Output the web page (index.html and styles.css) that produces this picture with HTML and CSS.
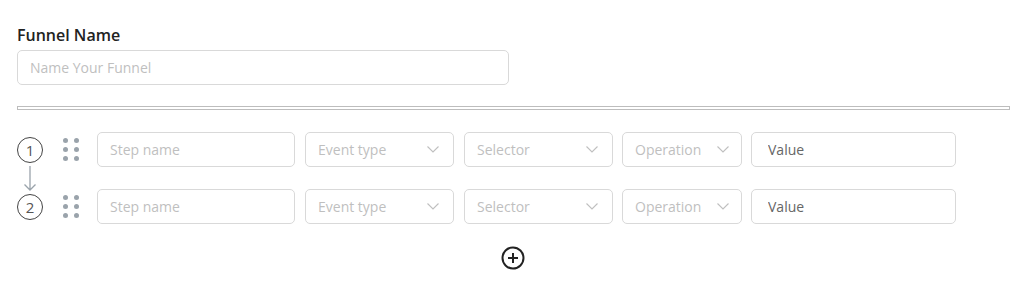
FILE: index.html
```html
<!doctype html>
<html lang="en">
<head>
    <meta charset="utf-8">
    <meta name="viewport" content="width=device-width, initial-scale=1">
    <title>Funnel</title>
    <link rel="stylesheet" href="styles.css">
</head>
<body>

<main class="funnel">
    <section class="funnel-name">
        <label for="name" class="label">Funnel Name</label>
        <input id="name" class="field name-field" type="text" placeholder="Name Your Funnel">
    </section>

    <hr class="divider">

    <section class="steps">
        <div class="step">
            <span class="num">1</span>
            <span class="handle"><i></i><i></i><i></i><i></i><i></i><i></i></span>
            <input class="field step-name" type="text" placeholder="Step name">
            <div class="field select w-event"><span>Event type</span><svg class="chev" width="12" height="7" viewBox="0 0 12 7"><polyline points="0.5,0.5 6,6 11.5,0.5"/></svg></div>
            <div class="field select w-event"><span>Selector</span><svg class="chev" width="12" height="7" viewBox="0 0 12 7"><polyline points="0.5,0.5 6,6 11.5,0.5"/></svg></div>
            <div class="field select w-op"><span>Operation</span><svg class="chev" width="12" height="7" viewBox="0 0 12 7"><polyline points="0.5,0.5 6,6 11.5,0.5"/></svg></div>
            <input class="field value" type="text" value="Value">
        </div>

        <div class="link">
            <svg width="12" height="26" viewBox="0 0 12 26"><path d="M6 0 V24 M0.5 18.5 L6 24 L11.5 18.5"/></svg>
        </div>

        <div class="step">
            <span class="num">2</span>
            <span class="handle"><i></i><i></i><i></i><i></i><i></i><i></i></span>
            <input class="field step-name" type="text" placeholder="Step name">
            <div class="field select w-event"><span>Event type</span><svg class="chev" width="12" height="7" viewBox="0 0 12 7"><polyline points="0.5,0.5 6,6 11.5,0.5"/></svg></div>
            <div class="field select w-event"><span>Selector</span><svg class="chev" width="12" height="7" viewBox="0 0 12 7"><polyline points="0.5,0.5 6,6 11.5,0.5"/></svg></div>
            <div class="field select w-op"><span>Operation</span><svg class="chev" width="12" height="7" viewBox="0 0 12 7"><polyline points="0.5,0.5 6,6 11.5,0.5"/></svg></div>
            <input class="field value" type="text" value="Value">
        </div>
    </section>

    <div class="add-row">
        <button class="add" type="button" aria-label="Add step">
            <svg width="24" height="24" viewBox="0 0 24 24"><circle cx="12" cy="12" r="10.5"/><path d="M12 7 V17 M7 12 H17"/></svg>
        </button>
    </div>
</main>

</body>
</html>
```

FILE: styles.css
```css
*, *:before, *:after {
    box-sizing: border-box;
    margin: 0;
    padding: 0;
}

body {
    font-family: "Open Sans", "Noto Sans", sans-serif;
    background: #fff;
    color: #222;
    padding: 24px 10px 0 17px;
}

.funnel-name {
    display: flex;
    flex-direction: column;
    gap: 4px;
}

.label {
    font-size: 16px;
    font-weight: 600;
    line-height: 22px;
    color: #222;
}

.field {
    height: 35px;
    border: 1px solid #d9d9d9;
    border-radius: 5px;
    background: #fff;
    font-family: inherit;
    font-size: 14px;
    color: #666;
    padding: 0 12px;
    outline: none;
}

.field::placeholder {
    color: #bfbfbf;
}

.name-field {
    width: 492px;
}

.divider {
    margin: 21px 0 22px;
    height: 4px;
    border: 1px solid #bdbdbd;
    background: #fff;
}

.steps {
    display: flex;
    flex-direction: column;
}

.step {
    display: flex;
    align-items: center;
    gap: 10px;
}

.num {
    width: 26px;
    height: 26px;
    border: 1.6px solid #444;
    border-radius: 50%;
    display: flex;
    align-items: center;
    justify-content: center;
    font-size: 15px;
    color: #555;
    margin-top: 1px;
}

.handle {
    display: grid;
    grid-template-columns: 5px 5px;
    column-gap: 6px;
    row-gap: 4px;
    margin: 0 8px 0 10px;
}

.handle i {
    width: 5px;
    height: 5px;
    border-radius: 50%;
    background: #9aa3ab;
}

.step-name {
    width: 198px;
}

.select {
    display: flex;
    align-items: center;
    justify-content: space-between;
    color: #bfbfbf;
    padding: 0 14px 0 12px;
}

.w-event {
    width: 149px;
}

.w-op {
    width: 120px;
    margin-left: -1px;
    padding-right: 12px;
}

.chev polyline {
    fill: none;
    stroke: #bfbfbf;
    stroke-width: 1.1;
}

.value {
    width: 205px;
    margin-left: -1px;
    padding-left: 16px;
}

.link {
    width: 26px;
    height: 22px;
    display: flex;
    justify-content: center;
}

.link svg {
    margin-top: -1px;
    overflow: visible;
}

.link path {
    fill: none;
    stroke: #9aa3ab;
    stroke-width: 1.3;
}

.add-row {
    display: flex;
    justify-content: center;
    padding: 22px 0 0;
    width: 992px;
}

.add {
    border: none;
    background: none;
    cursor: pointer;
    display: flex;
}

.add circle,
.add path {
    fill: none;
    stroke: #222;
    stroke-width: 2;
}
```
